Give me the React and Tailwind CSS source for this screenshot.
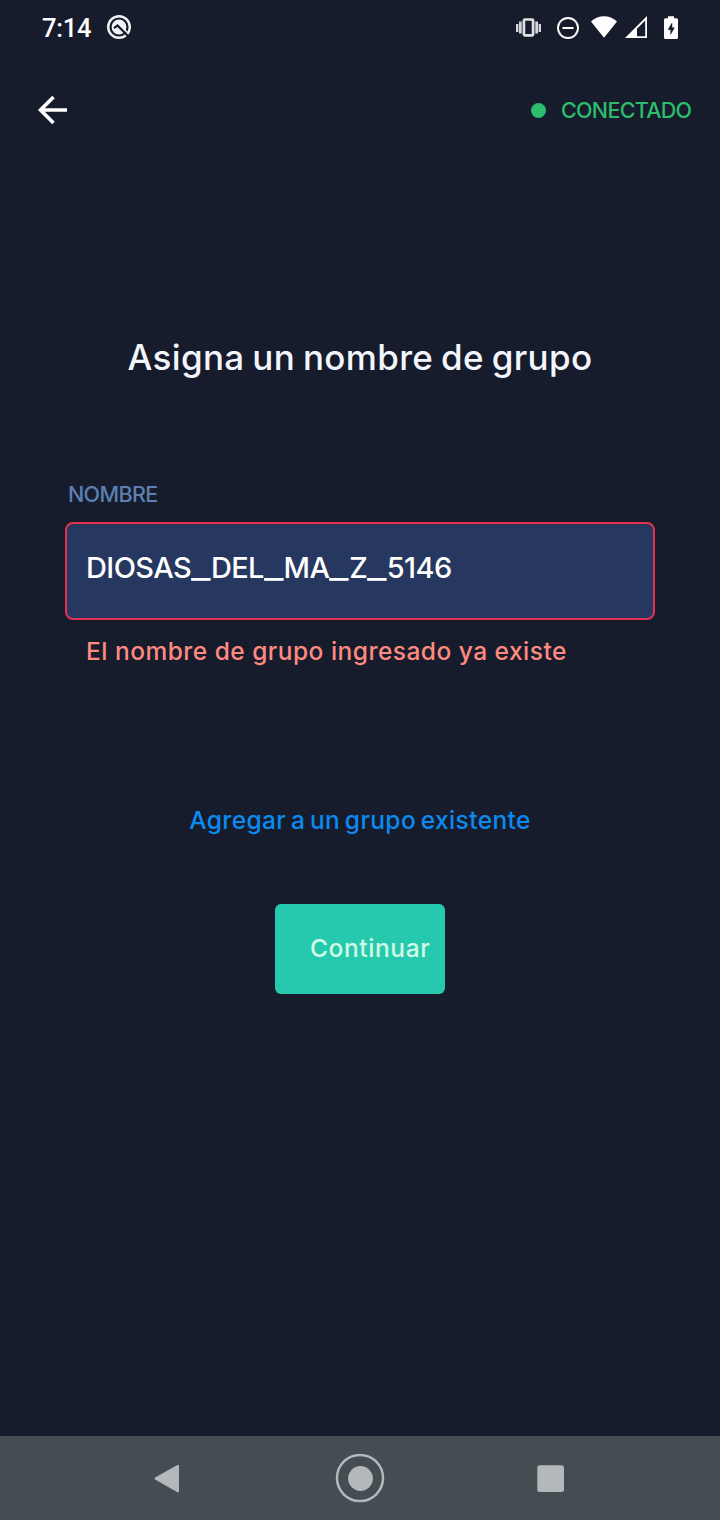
function StatusBar() {
  return (
    <div className="flex h-14 items-center">
      <span className="ml-[42px] w-[50px] font-['Roboto'] text-[25.500px] leading-[56px] font-medium tracking-[-0.200px] text-white">7:14</span>
      <svg className="mt-[-2px] ml-[14px]" width="26" height="26" viewBox="0 0 26 26" fill="none" stroke="#f1f2f4">
        <circle cx="13" cy="13" r="10.800" strokeWidth="2.400" />
        <circle cx="13" cy="13" r="7.400" fill="#f1f2f4" stroke="none" />
        <path d="M8 14.200L11.500 11.500L22 22" stroke="#161c2b" strokeWidth="2.200" />
        <path d="M18.300 15.500L22.500 19.500" strokeWidth="1.500" />
      </svg>
      <svg className="ml-auto mr-[39px]" width="166" height="28" viewBox="515 14 166 28" fill="#fff">
        <g fill="#d4d6dc">
          <rect x="516" y="24" width="2.400" height="8" />
          <rect x="519" y="21.500" width="2.700" height="12" />
          <rect x="535.300" y="21.500" width="2.700" height="12" />
          <rect x="538.600" y="24" width="2.400" height="8" />
        </g>
        <rect x="523.900" y="19.500" width="9.200" height="15.800" rx="1" fill="none" stroke="#dfe1e5" strokeWidth="2.700" />
        <circle cx="568" cy="28" r="10" fill="none" stroke="#fff" strokeWidth="1.900" />
        <path d="M562.500 27h11v2h-11z" />
        <path d="M604 37.800L591 21.500C594.800 18 599.200 16.300 604 16.300S613.200 18 617 21.500Z" />
        <path fillRule="evenodd" d="M625 38L647 16V38ZM637 36.300H645.200V20.500L637 28.700Z" />
        <path fillRule="evenodd" d="M668 16.200H674V18.200H676.500Q678 18.200 678 19.700V37.500Q678 39 676.500 39H665.500Q664 39 664 37.500V19.700Q664 18.200 665.500 18.200H668ZM672.200 22.200L667.700 29.700H670.400V35.300L674.700 27.600H672.200Z" />
      </svg>
    </div>
  );
}

function Header() {
  return (
    <header className="flex h-[108px] items-center pr-7 pl-[38px]">
      <svg width="30" height="30" viewBox="0 0 30 30" fill="none" stroke="#fff" strokeWidth="3.600">
        <path d="M29 15H3M15.500 2L2.500 15L15.500 28" />
      </svg>
      <div className="ml-auto flex items-center text-[#2bbd6b]">
        <span className="mr-[15px] size-[15px] rounded-full bg-[#2bbd6b]" />
        <span className="w-[131px] text-[21.500px] leading-7 font-[450] tracking-[-0.700px] whitespace-nowrap">CONECTADO</span>
      </div>
    </header>
  );
}

function Underscore() {
  return (
    <span className="inline-block w-[19.700px]">
      <span className="inline-block origin-left scale-x-[1.450] tracking-normal">_</span>
    </span>
  );
}

function GroupForm() {
  return (
    <main className="flex grow flex-col items-center">
      <h1 className="mt-[169px] text-[35px] leading-12 font-medium tracking-[0.320px] [word-spacing:-1.800px] whitespace-nowrap text-[#f3f5fc]">Asigna un nombre de grupo</h1>
      <div className="mt-[99px] flex w-[590px] flex-col">
        <span id="nombre" className="ml-[3px] text-[21.500px] leading-7 font-[450] tracking-[-0.650px] text-[#5d7fb3]">NOMBRE</span>
        <div className="mt-[14px] h-[98px] rounded-[8px] border-2 border-[#e5304f] bg-[#263860] px-[19px]">
          <div role="textbox" aria-labelledby="nombre" className="h-[87px] text-[29px] leading-[87px] font-medium tracking-[-0.600px] whitespace-nowrap text-white outline-none">
            DIOSAS<Underscore />DEL<Underscore />MA<Underscore />Z<Underscore />5146
          </div>
        </div>
        <p className="mt-[15px] ml-[21px] text-[24.500px] leading-8 font-medium tracking-[0.480px] whitespace-nowrap text-[#ff8a80]">El nombre de grupo ingresado ya existe</p>
      </div>
      <a href="#" className="mt-[137px] text-[24.500px] leading-8 font-medium tracking-[0.380px] [word-spacing:-2.200px] whitespace-nowrap text-[#0c8af0]">Agregar a un grupo existente</a>
      <button className="mt-[68px] h-[90px] w-[170px] rounded-[6px] bg-[#26c9ae] pb-0.5 pl-[35px] text-left text-[24.500px] font-medium tracking-[0.600px] whitespace-nowrap text-[#d2fbe3]">Continuar</button>
    </main>
  );
}

function NavigationBar() {
  return (
    <nav className="flex h-21 items-center justify-center bg-[#454c52]">
      <svg width="414" height="60" viewBox="153 1448 414 60" fill="#b3b8ba">
        <path d="M155 1477.500L177.500 1465Q179 1464.300 179 1466V1491Q179 1493 177.500 1492.200L155 1479.500Q154 1478.500 155 1477.500Z" />
        <circle cx="360" cy="1478" r="23" fill="none" stroke="#b3b8ba" strokeWidth="2.500" />
        <circle cx="360.500" cy="1478.500" r="12.400" />
        <rect x="537.300" y="1465.200" width="26.700" height="26.700" rx="2.500" />
      </svg>
    </nav>
  );
}

export default function App() {
  return (
    <div className="flex h-[1520px] w-[720px] flex-col overflow-hidden bg-[#161c2b] font-['Inter',sans-serif]">
      <StatusBar />
      <Header />
      <GroupForm />
      <NavigationBar />
    </div>
  );
}
